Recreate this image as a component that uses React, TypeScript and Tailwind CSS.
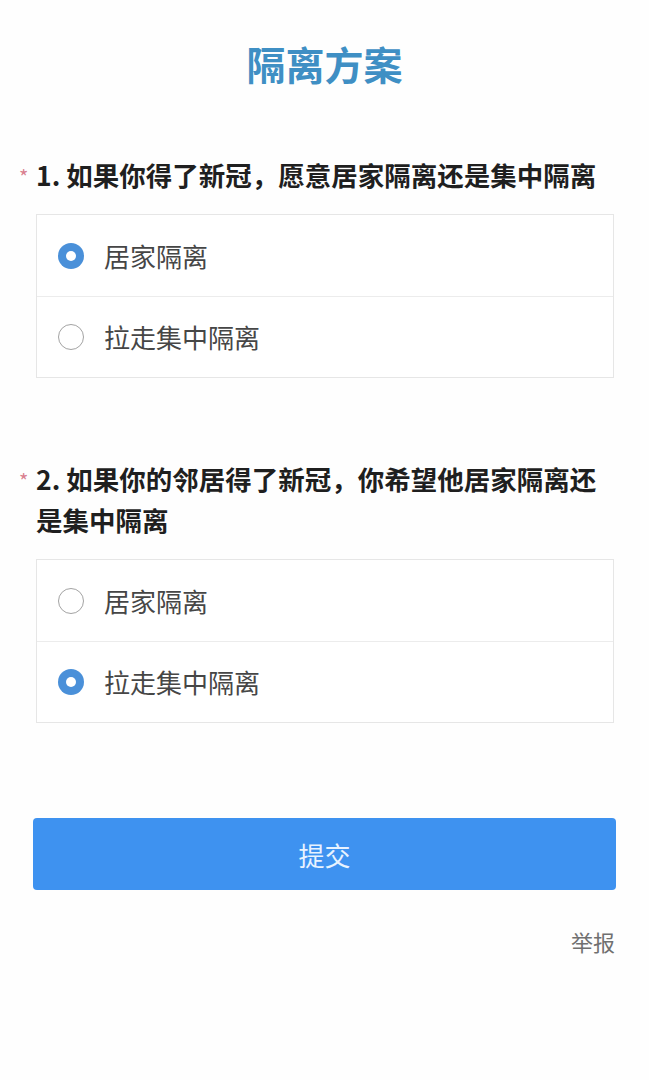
const font = { fontFamily: '"Noto Sans CJK SC", "Noto Sans", sans-serif' }

interface Question {
  no: number
  title: string
  options: string[]
  picked: number
}

const questions: Question[] = [
  { no: 1, title: "如果你得了新冠，愿意居家隔离还是集中隔离", options: ["居家隔离", "拉走集中隔离"], picked: 0 },
  { no: 2, title: "如果你的邻居得了新冠，你希望他居家隔离还是集中隔离", options: ["居家隔离", "拉走集中隔离"], picked: 1 },
]

function Radio({ checked }: { checked: boolean }) {
  return checked ? (
    <span className="flex h-[26px] w-[26px] shrink-0 items-center justify-center rounded-full bg-[#4a90d9]">
      <span className="h-[10px] w-[10px] rounded-full bg-white" />
    </span>
  ) : (
    <span className="h-[26px] w-[26px] shrink-0 rounded-full border-[1.5px] border-[#a3a3a3] bg-white" />
  )
}

function QuestionBlock({ q }: { q: Question }) {
  return (
    <div className="pr-[35px]">
      <div className="flex">
        <span className="w-[18px] shrink-0 pt-[8px] pl-[1px] text-[20px] leading-[30px] text-[#d9808f]">*</span>
        <h2 className="flex-1 text-[26.5px] font-bold leading-[41px] text-[#1f1f1f]">
          {q.no}. {q.title}
        </h2>
      </div>
      <div className="ml-[18px] mt-[19px] border border-[#e6e6e6] bg-white">
        {q.options.map((opt, i) => (
          <div
            key={opt}
            className={`flex h-[81px] items-center gap-[20px] pl-[21px] ${i > 0 ? "border-t border-[#ececec]" : ""}`}
          >
            <Radio checked={i === q.picked} />
            <span className="text-[26px] leading-[34px] text-[#464646]">{opt}</span>
          </div>
        ))}
      </div>
    </div>
  )
}

export default function App() {
  return (
    <div className="min-h-[1080px] w-[649px] bg-[#fefefe] pl-[18px]" style={font}>
      <h1 className="pt-[40px] pr-[18px] text-center text-[39px] font-bold leading-[46px] text-[#3f8fc4]">
        隔离方案
      </h1>

      <div className="mt-[68px]">
        <QuestionBlock q={questions[0]} />
      </div>
      <div className="mt-[80px]">
        <QuestionBlock q={questions[1]} />
      </div>

      <div className="mr-[33px] ml-[15px] mt-[95px]">
        <button className="flex h-[72px] w-full items-center justify-center rounded-[4px] bg-[#3e92f0] text-[26px] text-[#e8f3ff]">
          提交
        </button>
      </div>

      <div className="mt-[36px] mr-[34px] text-right text-[22px] leading-[30px] text-[#707070]">举报</div>
    </div>
  )
}
